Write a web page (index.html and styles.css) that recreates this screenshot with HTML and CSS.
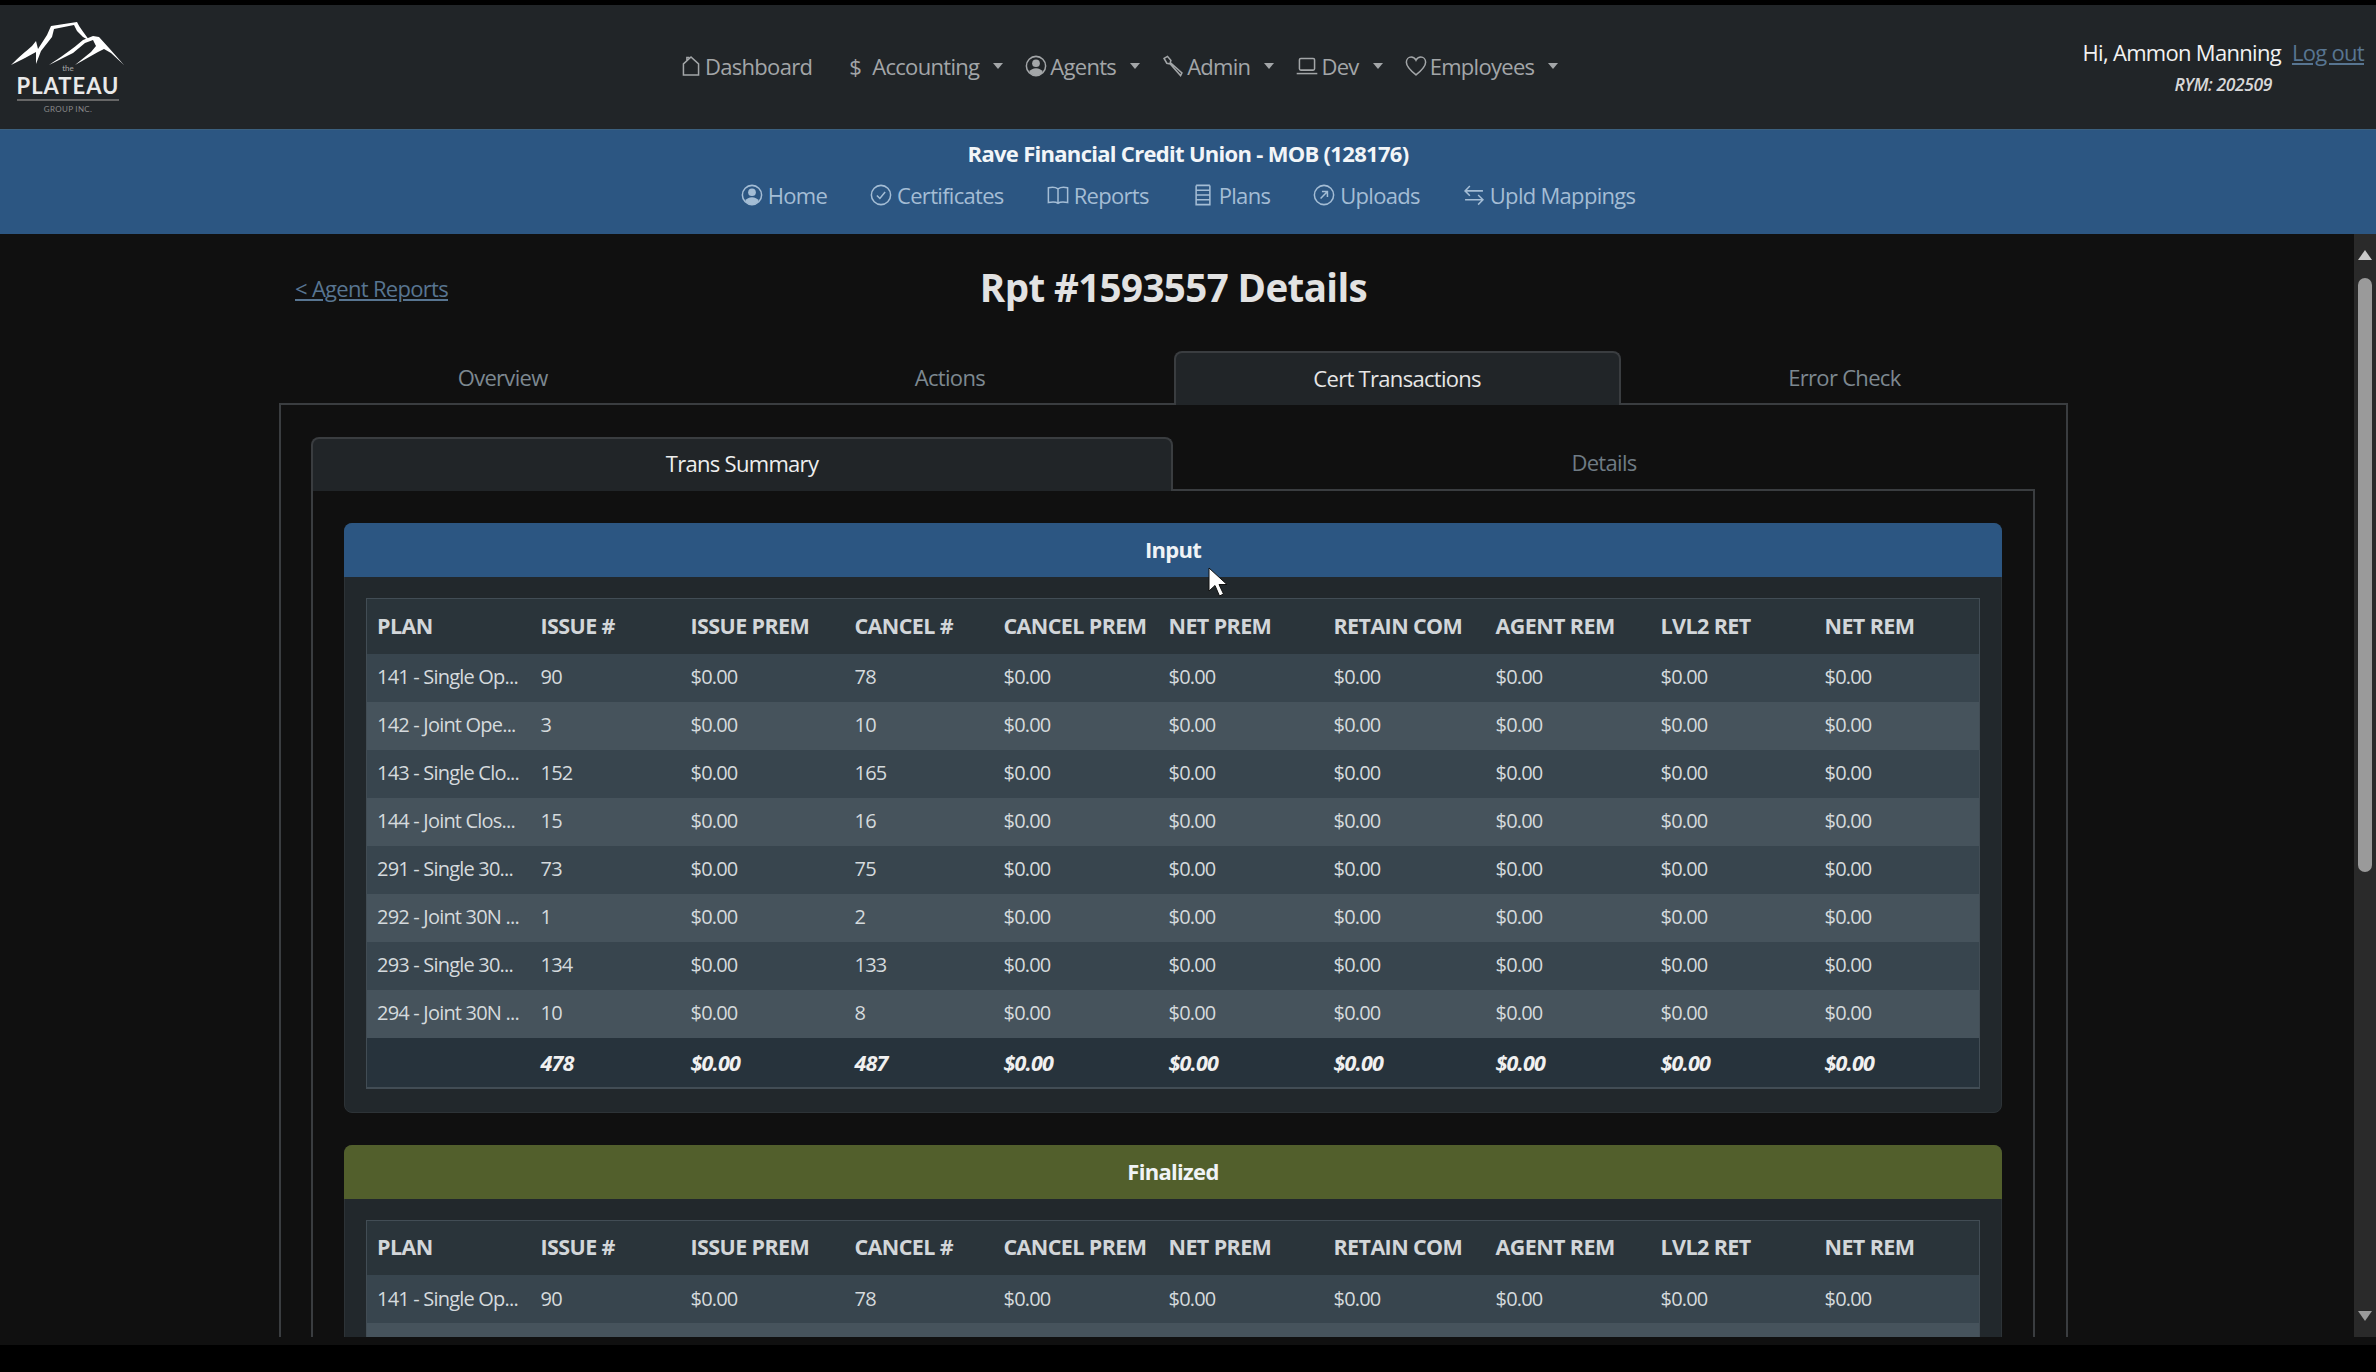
FILE: index.html
```html
<!DOCTYPE html>
<html lang="en">
<head>
  <meta charset="UTF-8" />
  <title>Rpt #1593557 Details</title>
  <link rel="stylesheet" href="styles.css">
</head>
<body>
  <div class="page">
    <header class="topbar">
      <a class="logo" href="#">
        <svg class="logo-peaks" viewBox="0 0 114 44" width="114" height="44">
          <path d="M0 43 C8 35 14 30 21 24 L25 19 L27 27 L36 13 L40 4 L66 0 C69 6 73 11 79 19 L72 15 L66 9 L63 3 L43 7 L41 15 L30 29 L25 42 L25 30 L14 36 Z" fill="#fff"/>
          <path d="M38 43 C48 36 62 27 72 18 L82 14 L88 15 L98 26 L113 43 L100 31 L93 27 L87 30 L64 43 L80 30 L85 24 L82 18 L74 21 L62 31 Z" fill="#fff"/>
        </svg>
        <span class="logo-the">the</span>
        <span class="logo-name">PLATEAU</span>
        <span class="logo-sub">GROUP INC.</span>
      </a>
      <nav class="main-nav">
        <a href="#"><svg class="ico" viewBox="0 0 16 16"><path d="M8 1.5 2.500 6.500V14.500H13.500V6.500Z M5 3.800V1.800H6.800"/></svg>Dashboard</a>
        <a href="#" class="drop"><span class="dollar">$</span>Accounting</a>
        <a href="#" class="drop"><svg class="ico" viewBox="0 0 16 16"><circle cx="8" cy="8" r="7"/><circle class="solid" cx="8" cy="6" r="2.800"/><path class="solid" d="M3 12.400C4 10.400 6 9.600 8 9.600S12 10.400 13 12.400C11.800 14 10 15 8 15S4.200 14 3 12.400Z"/></svg>Agents</a>
        <a href="#" class="drop"><svg class="ico" viewBox="0 0 16 16"><path d="M1.500 2.500 4 1 6.500 4 6 5.500 14.500 13 13.500 15 6 6.500 3.500 6Z"/></svg>Admin</a>
        <a href="#" class="drop"><svg class="ico" viewBox="0 0 16 16"><rect x="2.500" y="2.500" width="11" height="8.500" rx="1"/><path d="M.5 13.500H15.500"/></svg>Dev</a>
        <a href="#" class="drop"><svg class="ico" viewBox="0 0 16 16"><path d="M8 14.500C3 10.500 1 8 1 5.300 1 3 2.700 1.500 4.500 1.500 6 1.500 7.300 2.400 8 3.800 8.700 2.400 10 1.500 11.500 1.500 13.300 1.500 15 3 15 5.300 15 8 13 10.500 8 14.500Z"/></svg>Employees</a>
      </nav>
      <div class="user-box">
        <div class="user-line"><span class="user-name">Hi, Ammon Manning</span><a href="#">Log out</a></div>
        <div class="rym">RYM: 202509</div>
      </div>
    </header>

    <section class="client-bar">
      <div class="client-name">Rave Financial Credit Union - MOB (128176)</div>
      <nav class="client-nav">
        <a href="#"><svg class="ico" viewBox="0 0 16 16"><circle cx="8" cy="8" r="7"/><circle class="solid" cx="8" cy="6" r="2.800"/><path class="solid" d="M3 12.400C4 10.400 6 9.600 8 9.600S12 10.400 13 12.400C11.800 14 10 15 8 15S4.200 14 3 12.400Z"/></svg>Home</a>
        <a href="#"><svg class="ico" viewBox="0 0 16 16"><circle cx="8" cy="8" r="7"/><path d="M5 8.300 7.200 10.500 11 5.800"/></svg>Certificates</a>
        <a href="#"><svg class="ico" viewBox="0 0 16 16"><path d="M8 3.500C6.500 2.500 3.500 2.200 1 2.800V13.500C3.500 13 6.500 13 8 14 9.500 13 12.500 13 15 13.500V2.800C12.500 2.200 9.500 2.500 8 3.500ZM8 3.500V14"/></svg>Reports</a>
        <a href="#"><svg class="ico" viewBox="0 0 16 16"><path d="M3 1V15H13V1M3 1H13M3 4.500H13M3 8H13M3 11.500H13"/></svg>Plans</a>
        <a href="#"><svg class="ico" viewBox="0 0 16 16"><circle cx="8" cy="8" r="7"/><path d="M5.500 10.500 10.500 5.500M6.500 5.500H10.500V9.500"/></svg>Uploads</a>
        <a href="#"><svg class="ico" viewBox="0 0 16 16"><path d="M1.500 5H14.500M5 1.500 1.500 5 5 8.500M14.500 11.500H1.500M11 8 14.500 11.500 11 15"/></svg>Upld Mappings</a>
      </nav>
    </section>

    <main class="content">
      <div class="scroll-area">
        <div class="title-row">
          <a class="back-link" href="#">&lt; Agent Reports</a>
          <h1>Rpt #1593557 Details</h1>
        </div>

        <div class="tabs">
          <a href="#">Overview</a>
          <a href="#">Actions</a>
          <a href="#" class="active">Cert Transactions</a>
          <a href="#">Error Check</a>
        </div>
        <div class="tab-pane">
          <div class="tabs sub-tabs">
            <a href="#" class="active">Trans Summary</a>
            <a href="#">Details</a>
          </div>
          <div class="sub-pane">

            <div class="card">
              <div class="card-head">Input</div>
              <div class="card-body">
                <table>
                  <thead>
                    <tr><th>PLAN</th><th>ISSUE #</th><th>ISSUE PREM</th><th>CANCEL #</th><th>CANCEL PREM</th><th>NET PREM</th><th>RETAIN COM</th><th>AGENT REM</th><th>LVL2 RET</th><th>NET REM</th></tr>
                  </thead>
                  <tbody>
                    <tr><td>141 - Single Op...</td><td>90</td><td>$0.00</td><td>78</td><td>$0.00</td><td>$0.00</td><td>$0.00</td><td>$0.00</td><td>$0.00</td><td>$0.00</td></tr>
                    <tr><td>142 - Joint Ope...</td><td>3</td><td>$0.00</td><td>10</td><td>$0.00</td><td>$0.00</td><td>$0.00</td><td>$0.00</td><td>$0.00</td><td>$0.00</td></tr>
                    <tr><td>143 - Single Clo...</td><td>152</td><td>$0.00</td><td>165</td><td>$0.00</td><td>$0.00</td><td>$0.00</td><td>$0.00</td><td>$0.00</td><td>$0.00</td></tr>
                    <tr><td>144 - Joint Clos...</td><td>15</td><td>$0.00</td><td>16</td><td>$0.00</td><td>$0.00</td><td>$0.00</td><td>$0.00</td><td>$0.00</td><td>$0.00</td></tr>
                    <tr><td>291 - Single 30...</td><td>73</td><td>$0.00</td><td>75</td><td>$0.00</td><td>$0.00</td><td>$0.00</td><td>$0.00</td><td>$0.00</td><td>$0.00</td></tr>
                    <tr><td>292 - Joint 30N ...</td><td>1</td><td>$0.00</td><td>2</td><td>$0.00</td><td>$0.00</td><td>$0.00</td><td>$0.00</td><td>$0.00</td><td>$0.00</td></tr>
                    <tr><td>293 - Single 30...</td><td>134</td><td>$0.00</td><td>133</td><td>$0.00</td><td>$0.00</td><td>$0.00</td><td>$0.00</td><td>$0.00</td><td>$0.00</td></tr>
                    <tr><td>294 - Joint 30N ...</td><td>10</td><td>$0.00</td><td>8</td><td>$0.00</td><td>$0.00</td><td>$0.00</td><td>$0.00</td><td>$0.00</td><td>$0.00</td></tr>
                  </tbody>
                  <tfoot>
                    <tr><td></td><td>478</td><td>$0.00</td><td>487</td><td>$0.00</td><td>$0.00</td><td>$0.00</td><td>$0.00</td><td>$0.00</td><td>$0.00</td></tr>
                  </tfoot>
                </table>
              </div>
            </div>

            <div class="card">
              <div class="card-head finalized">Finalized</div>
              <div class="card-body">
                <table>
                  <thead>
                    <tr><th>PLAN</th><th>ISSUE #</th><th>ISSUE PREM</th><th>CANCEL #</th><th>CANCEL PREM</th><th>NET PREM</th><th>RETAIN COM</th><th>AGENT REM</th><th>LVL2 RET</th><th>NET REM</th></tr>
                  </thead>
                  <tbody>
                    <tr><td>141 - Single Op...</td><td>90</td><td>$0.00</td><td>78</td><td>$0.00</td><td>$0.00</td><td>$0.00</td><td>$0.00</td><td>$0.00</td><td>$0.00</td></tr>
                    <tr><td></td><td></td><td></td><td></td><td></td><td></td><td></td><td></td><td></td><td></td></tr>
                  </tbody>
                </table>
              </div>
            </div>

          </div>
        </div>
      </div>

      <div class="scrollbar">
        <span class="arrow-up"></span>
        <span class="thumb"></span>
        <span class="arrow-down"></span>
      </div>

      <svg class="cursor" viewBox="0 0 20 30" width="20" height="30"><path d="M1 1V24L7 18.500 11.500 29 15.500 27 11 17.500H19Z" fill="#fff" stroke="#111" stroke-width="1"/></svg>
    </main>
  </div>
</body>
</html>
```

FILE: styles.css
```css
* {
  box-sizing: border-box;
}

body {
  margin: 0;
  background: #000;
  color: #dee2e6;
  font-family: "Open Sans", sans-serif;
  font-size: 22px;
  letter-spacing: -0.7px;
  overflow: hidden;
}

a {
  color: inherit;
  text-decoration: none;
}

.page {
  height: 1372px;
  padding: 5px 0 27px;
  display: flex;
  flex-direction: column;
}

/* top bar */
.topbar {
  height: 124px;
  background: #212528;
  display: flex;
  align-items: center;
  position: relative;
}

.logo {
  width: 136px;
  padding-top: 17px;
  align-self: flex-start;
  display: flex;
  flex-direction: column;
  align-items: center;
  color: #fff;
  font-family: Lato, sans-serif;
  flex: none;
}

.logo-peaks {
  display: block;
}

.logo-the {
  font-size: 8px;
  line-height: 10px;
  letter-spacing: 0;
  color: #aaa;
  margin-top: -3px;
}

.logo-name {
  font-size: 22px;
  line-height: 26px;
  font-weight: 700;
  letter-spacing: 1px;
  color: #e9e9e9;
  border-bottom: 2px solid #666;
}

.logo-sub {
  font-size: 8px;
  line-height: 10px;
  letter-spacing: 0.3px;
  color: #888;
  margin-top: 3px;
}

.main-nav {
  margin-left: 544px;
  margin-top: -3px;
  display: flex;
  align-items: center;
  gap: 33px;
  color: #a3a6a8;
}

.main-nav a,
.client-nav a {
  display: flex;
  align-items: center;
  gap: 3px;
}

.main-nav a:first-child {
  margin-right: 3px;
}

.client-nav a {
  gap: 5px;
}

.drop {
  margin-right: -11px;
}

.drop::after {
  content: "";
  margin-left: 11px;
  border-top: 6px solid currentColor;
  border-left: 5.5px solid transparent;
  border-right: 5.5px solid transparent;
}

.ico {
  width: 22px;
  height: 22px;
  fill: none;
  stroke: currentColor;
  stroke-width: 1.1;
  flex: none;
}

.ico .solid {
  fill: currentColor;
  stroke: none;
}

.dollar {
  width: 14px;
  margin-right: 7px;
  text-align: center;
}

.user-box {
  margin-left: auto;
  padding-right: 12px;
  margin-top: -2px;
  text-align: center;
}

.user-line {
  display: flex;
  gap: 11px;
  color: #f2f2f2;
}

.user-line a {
  color: #587591;
  text-decoration: underline;
}

.rym {
  font-size: 17.5px;
  font-style: italic;
  font-weight: 600;
  letter-spacing: -0.4px;
  color: #d8d8d8;
  margin-top: 6px;
  line-height: 22px;
}

/* client bar */
.client-bar {
  height: 105px;
  background: #2c5682;
  border-top: 1px solid #3b607f;
  text-align: center;
  flex: none;
}

.client-name {
  font-weight: 700;
  color: #f2f5f8;
  margin-top: 8px;
  line-height: 30px;
}

.client-nav {
  display: flex;
  justify-content: center;
  gap: 43px;
  margin-top: 12px;
  color: #a4bdd5;
  line-height: 30px;
}

/* page body */
.content {
  flex: 1;
  min-height: 0;
  background: #101010;
  display: flex;
  position: relative;
  padding-bottom: 8px;
}

.scroll-area {
  flex: 1;
  min-width: 0;
  overflow: hidden;
  padding: 0 286px 0 279px;
}

.title-row {
  height: 117px;
  position: relative;
  text-align: center;
}

.back-link {
  position: absolute;
  left: 16px;
  top: 39px;
  color: #587591;
  text-decoration: underline;
  line-height: 30px;
}

h1 {
  margin: 0;
  padding: 27px 0 0 0;
  font-size: 38.5px;
  line-height: 52px;
  font-weight: 700;
  letter-spacing: -0.6px;
  color: #e2e2e2;
}

.tabs {
  display: grid;
  grid-template-columns: repeat(4, 1fr);
  height: 52px;
}

.tabs a {
  display: flex;
  align-items: center;
  justify-content: center;
  color: #7d8890;
  border: 2px solid transparent;
  border-bottom: 0;
  padding-bottom: 3px;
}

.tabs a.active {
  background: #212528;
  color: #e6e6e6;
  border-color: #3a3d40;
  border-radius: 8px 8px 0 0;
  margin-bottom: -2px;
  position: relative;
}

.tab-pane {
  border: 2px solid #3a3d40;
  border-bottom: 0;
  padding: 32px 31px 0 30px;
}

.sub-tabs {
  grid-template-columns: 1fr 1fr;
}

.sub-tabs a {
  color: #6f7b84;
  padding-bottom: 5px;
}

.sub-pane {
  border: 2px solid #3a3d40;
  border-bottom: 0;
  padding: 32px 31px 0;
}

.sub-tabs a.active {
  color: #eee;
}

.card {
  background: #22282c;
  border-radius: 8px;
  border: 1px solid #2d3337;
  margin-bottom: 32px;
}

.card-head {
  height: 54px;
  padding-bottom: 2px;
  background: #2c5682;
  border-radius: 8px 8px 0 0;
  margin: -1px -1px 0;
  display: flex;
  align-items: center;
  justify-content: center;
  font-weight: 700;
  color: #f0f3f6;
}

.card-head.finalized {
  background: #525f2c;
}

.card-body {
  padding: 21px 21px 23px;
}

/* tables */
table {
  width: 100%;
  border-collapse: collapse;
  table-layout: fixed;
  border: 1px solid #424d55;
  border-bottom-width: 2px;
  font-size: 20px;
  letter-spacing: -0.8px;
}

th {
  height: 55px;
  padding: 0 10px 2px;
  background: #2a343a;
  color: #d2d6d9;
  font-size: 21.5px;
  letter-spacing: -0.6px;
  font-weight: 700;
  text-align: left;
  white-space: nowrap;
}

td {
  height: 48px;
  padding: 0 10px 2px;
  white-space: nowrap;
  color: #d5dadd;
}

th:nth-child(1) { width: 164px; }
th:nth-child(2) { width: 150px; }
th:nth-child(3) { width: 164px; }
th:nth-child(4) { width: 149px; }
th:nth-child(5) { width: 165px; }
th:nth-child(6) { width: 165px; }
th:nth-child(7) { width: 162px; }
th:nth-child(8) { width: 165px; }
th:nth-child(9) { width: 164px; }

tbody tr:nth-child(odd) {
  background: #38454e;
}

tbody tr:nth-child(even) {
  background: #46535c;
}

tfoot td {
  height: 50px;
  padding-bottom: 0;
  background: #27333c;
  color: #f0f0f0;
  font-weight: 700;
  font-style: italic;
  font-size: 21.5px;
}

/* scrollbar */
.scrollbar {
  width: 22px;
  flex: none;
  background: #2a2a2a;
  position: relative;
}

.arrow-up,
.arrow-down {
  position: absolute;
  left: 4px;
  border-left: 7px solid transparent;
  border-right: 7px solid transparent;
}

.arrow-up {
  top: 16px;
  border-bottom: 10px solid #c9c9c9;
}

.arrow-down {
  bottom: 16px;
  border-top: 10px solid #9b9b9b;
}

.thumb {
  position: absolute;
  left: 4px;
  top: 44px;
  width: 14px;
  height: 594px;
  border-radius: 7px;
  background: #9a9a9a;
}

.cursor {
  position: absolute;
  left: 1208px;
  top: 333px;
  width: 20px;
  height: 30px;
}
```
